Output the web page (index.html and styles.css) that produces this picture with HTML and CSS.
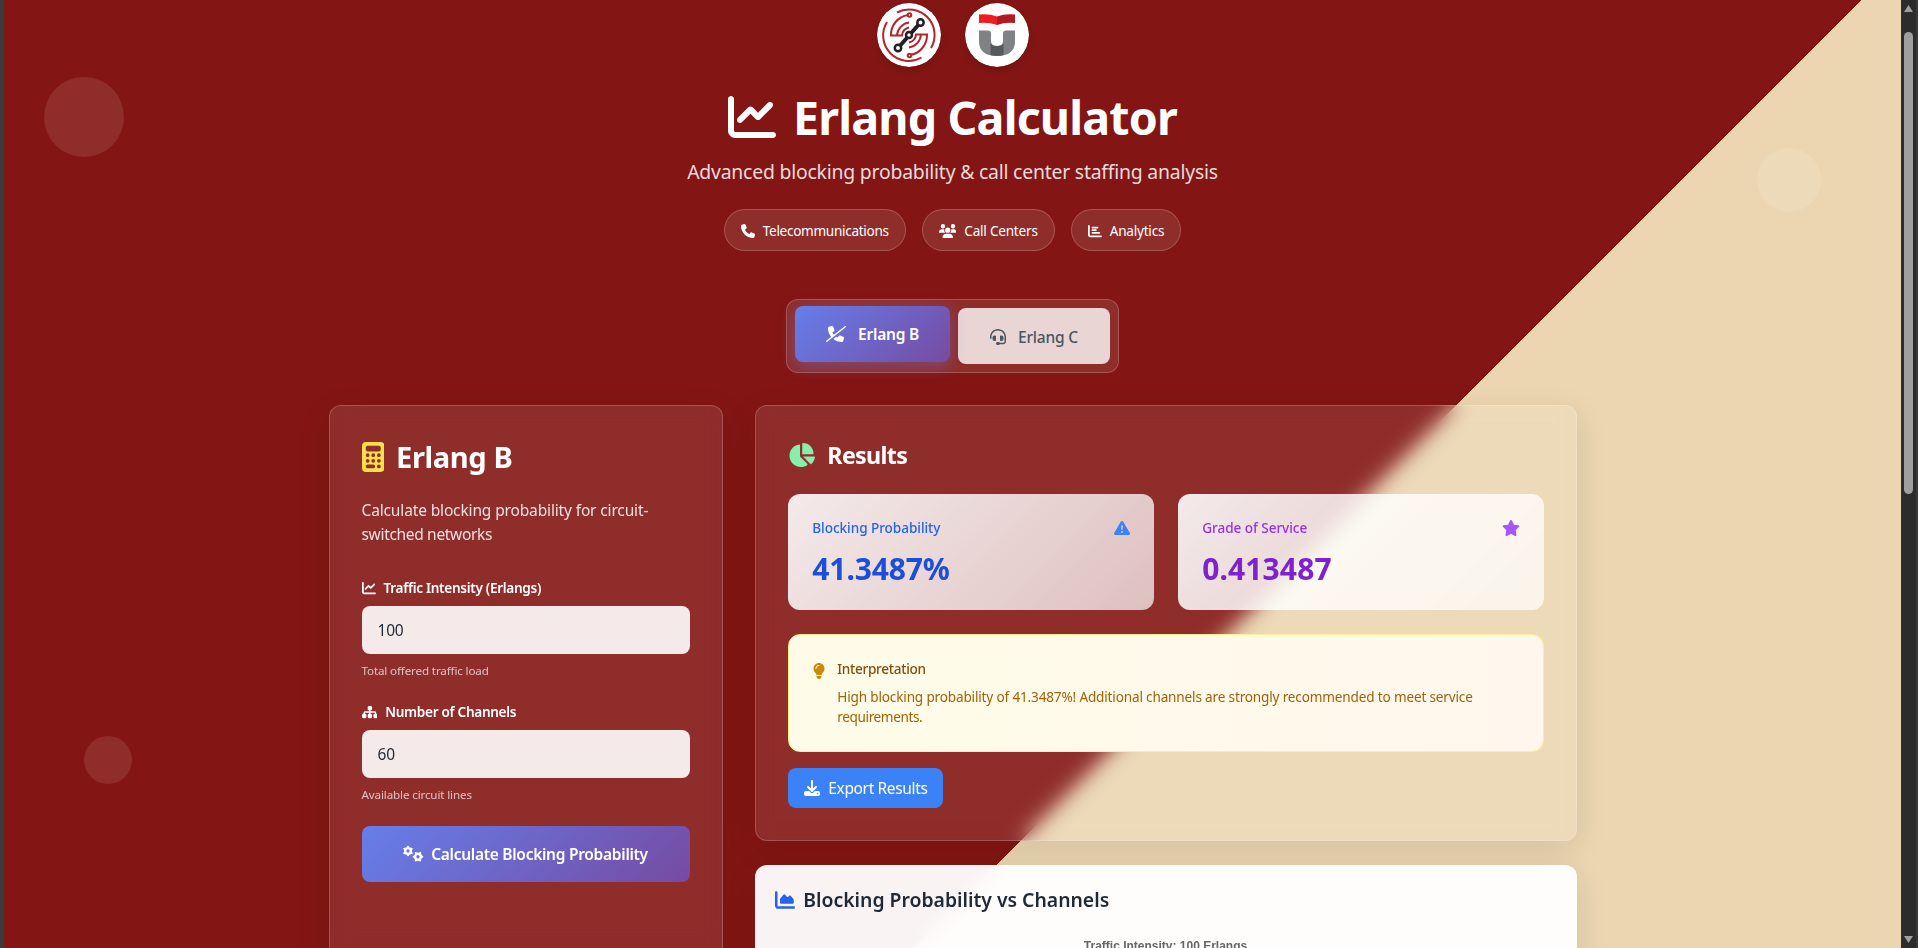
FILE: index.html
```html
<!DOCTYPE html>
<html lang="en">
<head>
<meta charset="utf-8">
<title>Erlang Calculator</title>
<link rel="stylesheet" href="styles.css">
</head>
<body>
<div class="frame">
<div class="page">
<span class="bubble bubble-a"></span><span class="bubble bubble-b"></span><span class="bubble bubble-c"></span>
<header class="hero">
<div class="logos">
<svg class="logo" viewBox="0 0 64 64"><circle cx="32" cy="32" r="32" fill="#fff"/>
<g fill="none" stroke="#b3262c" stroke-width="2"><path d="M20 9.500A25.500 25.500 0 0 1 54 45"/><path d="M10 19A25.500 25.500 0 0 0 44.500 54.500"/>
<path d="M31 12A20 20 0 0 0 14 32.500h6A14 14 0 0 1 32 19.500M32 24.500a9 9 0 0 0-7 8h-5"/><path d="M33 52A20 20 0 0 0 50 31.500h-6A14 14 0 0 1 32 44.500M32 39.500a9 9 0 0 0 7-8h5"/><circle cx="32.500" cy="12" r="1.800" fill="#fff"/><circle cx="32.500" cy="52.500" r="1.800" fill="#fff"/></g>
<path d="M21 45L43.500 19.500" stroke="#222226" stroke-width="4"/><g fill="#fff" stroke="#222226" stroke-width="2.500"><circle cx="43.500" cy="19.500" r="3.200"/><circle cx="32" cy="32" r="3"/><circle cx="21" cy="45" r="3.200"/></g></svg>
<svg class="logo" viewBox="0 0 64 64"><circle cx="32" cy="32" r="32" fill="#fff"/><path d="M14 11.500q10-1 18 2v8.500q-8-3-18-2z" fill="#ee1c23"/><path d="M50 11.500q-10-1-18 2v8.500q8-3 18-2z" fill="#b01a20"/><path d="M14 27.500h9q3 0 3 3V38q0 5 6 5t6-5v-7.500q0-3 3-3h9V38q0 15-18 15T14 38z" fill="#808285"/><path d="M25.500 40.500q2 2.500 6.500 2.500t6.500-2.500v11.500q-6.500 1.700-13 0z" fill="#58595b"/></svg>
</div>
<h1 class="title"><svg class="ic" viewBox="0 0 512 512"><path d="M64 64c0-17.700-14.300-32-32-32S0 46.300 0 64V400c0 44.200 35.800 80 80 80H480c17.700 0 32-14.300 32-32s-14.300-32-32-32H80c-8.800 0-16-7.200-16-16V64zm406.600 86.600c12.500-12.500 12.500-32.800 0-45.300s-32.800-12.500-45.300 0L320 210.700l-57.400-57.400c-12.500-12.500-32.800-12.500-45.300 0l-112 112c-12.500 12.500-12.500 32.800 0 45.300s32.800 12.500 45.300 0L240 221.300l57.400 57.400c12.500 12.500 32.800 12.500 45.300 0l128-128z"/></svg><span class="t">Erlang Calculator</span></h1>
<p class="subtitle"><span class="t">Advanced blocking probability &amp; call center staffing analysis</span></p>
<div class="pills">
<span class="pill"><svg class="ic" viewBox="0 0 512 512"><path d="M164.900 24.600c-7.700-18.600-28-28.500-47.400-23.200l-88 24C12.100 30.200 0 46 0 64C0 311.400 200.600 512 448 512c18 0 33.800-12.100 38.600-29.500l24-88c5.300-19.400-4.600-39.700-23.200-47.400l-96-40c-16.300-6.800-35.200-2.100-46.300 11.600L304.700 368C234.300 334.700 177.300 277.700 144 207.300L193.300 167c13.700-11.200 18.400-30 11.600-46.300l-40-96z"/></svg><span class="t t-tele">Telecommunications</span></span>
<span class="pill"><svg class="ic wide" viewBox="0 0 640 512"><path d="M144 0a80 80 0 1 1 0 160A80 80 0 1 1 144 0zM512 0a80 80 0 1 1 0 160A80 80 0 1 1 512 0zM0 298.700C0 239.800 47.800 192 106.700 192h42.700c15.900 0 31 3.500 44.600 9.700c-1.300 7.200-1.900 14.700-1.900 22.300c0 38.200 16.800 72.500 43.300 96H21.300C9.600 320 0 310.400 0 298.700zM405.300 320h-.7c26.600-23.500 43.300-57.800 43.300-96c0-7.600-.7-15-1.900-22.300c13.600-6.300 28.700-9.700 44.600-9.700h42.700C592.200 192 640 239.800 640 298.700c0 11.800-9.600 21.300-21.300 21.300H405.300zM224 224a96 96 0 1 1 192 0 96 96 0 1 1 -192 0zM128 485.300C128 411.700 187.700 352 261.300 352H378.700C452.300 352 512 411.700 512 485.300c0 14.700-11.900 26.700-26.700 26.700H154.700c-14.700 0-26.700-11.900-26.700-26.700z"/></svg><span class="t">Call Centers</span></span>
<span class="pill"><svg class="ic" viewBox="0 0 512 512"><path d="M32 32c17.700 0 32 14.300 32 32V400c0 8.800 7.200 16 16 16H480c17.700 0 32 14.300 32 32s-14.300 32-32 32H80c-44.200 0-80-35.800-80-80V64C0 46.300 14.300 32 32 32zm96 96c0-17.700 14.300-32 32-32l192 0c17.700 0 32 14.300 32 32s-14.300 32-32 32H160c-17.700 0-32-14.300-32-32zm32 64H288c17.700 0 32 14.300 32 32s-14.300 32-32 32H160c-17.700 0-32-14.300-32-32s14.300-32 32-32zm0 96H416c17.700 0 32 14.300 32 32s-14.300 32-32 32H160c-17.700 0-32-14.300-32-32s14.300-32 32-32z"/></svg><span class="t">Analytics</span></span>
</div>
</header>
<nav class="switch">
<button class="tab tab-on"><svg class="ic wide" viewBox="0 0 640 512"><path d="M228.900 24.600c-7.700-18.600-28-28.500-47.400-23.200l-88 24C76.100 30.200 64 46 64 64c0 107.400 37.800 206 100.800 283.100L9.200 469.100c-10.400 8.200-12.300 23.300-4.100 33.700s23.300 12.300 33.700 4.100l592-464c10.400-8.200 12.300-23.300 4.100-33.700s-23.300-12.300-33.700-4.100L253 278c-17.800-21.500-32.900-45.200-45-70.700L257.300 167c13.700-11.200 18.400-30 11.600-46.300l-40-96zm96.800 319l-91.300 72C310.700 476 407.100 512 512 512c18 0 33.800-12.100 38.600-29.500l24-88c5.300-19.400-4.600-39.700-23.200-47.400l-96-40c-16.300-6.800-35.200-2.100-46.300 11.600L368.700 368c-15-7.100-29.300-15.200-43-24.300z"/></svg><span class="t">Erlang B</span></button>
<button class="tab tab-off"><svg class="ic" viewBox="0 0 512 512"><path d="M256 48C141.100 48 48 141.100 48 256v40c0 13.300-10.700 24-24 24s-24-10.700-24-24V256C0 114.600 114.600 0 256 0S512 114.600 512 256V400.100c0 48.600-39.400 88-88.100 88L313.600 488c-8.300 14.300-23.800 24-41.600 24H240c-26.500 0-48-21.500-48-48s21.500-48 48-48h32c17.800 0 33.300 9.700 41.600 24l110.400 .1c22.100 0 40-17.900 40-40V256c0-114.900-93.100-208-208-208zM144 208h16c17.700 0 32 14.300 32 32V352c0 17.700-14.300 32-32 32H144c-35.300 0-64-28.700-64-64V272c0-35.300 28.700-64 64-64zm224 0c35.300 0 64 28.700 64 64v48c0 35.300-28.700 64-64 64H352c-17.700 0-32-14.300-32-32V240c0-17.700 14.300-32 32-32h16z"/></svg><span class="t">Erlang C</span></button>
</nav>
<main class="grid">
<section class="panel form">
<h2 class="form-title"><svg class="ic calc" viewBox="0 0 384 512"><path fill-rule="evenodd" d="M64 0C28.700 0 0 28.700 0 64V448c0 35.300 28.700 64 64 64H320c35.300 0 64-28.700 64-64V64c0-35.300-28.700-64-64-64H64zM96 64H288c17.700 0 32 14.300 32 32v32c0 17.700-14.300 32-32 32H96c-17.700 0-32-14.300-32-32V96c0-17.700 14.300-32 32-32zm32 160a32 32 0 1 1 -64 0 32 32 0 1 1 64 0zM96 352a32 32 0 1 1 0-64 32 32 0 1 1 0 64zM64 416c0-17.700 14.300-32 32-32h96c17.700 0 32 14.300 32 32s-14.300 32-32 32H96c-17.700 0-32-14.300-32-32zM192 256a32 32 0 1 1 0-64 32 32 0 1 1 0 64zm32 64a32 32 0 1 1 -64 0 32 32 0 1 1 64 0zm64-64a32 32 0 1 1 0-64 32 32 0 1 1 0 64zm32 64a32 32 0 1 1 -64 0 32 32 0 1 1 64 0zM288 448a32 32 0 1 1 0-64 32 32 0 1 1 0 64z"/></svg><span class="t">Erlang B</span></h2>
<p class="desc"><span class="t">Calculate blocking probability for circuit-</span><br><span class="t t-last">switched networks</span></p>
<label class="label"><svg class="ic" viewBox="0 0 512 512"><path d="M64 64c0-17.700-14.300-32-32-32S0 46.300 0 64V400c0 44.200 35.800 80 80 80H480c17.700 0 32-14.300 32-32s-14.300-32-32-32H80c-8.800 0-16-7.200-16-16V64zm406.600 86.600c12.500-12.500 12.500-32.800 0-45.300s-32.800-12.500-45.300 0L320 210.700l-57.400-57.400c-12.500-12.500-32.800-12.500-45.300 0l-112 112c-12.500 12.500-12.500 32.800 0 45.300s32.800 12.500 45.300 0L240 221.300l57.400 57.400c12.500 12.500 32.800 12.500 45.300 0l128-128z"/></svg><span class="t">Traffic Intensity (Erlangs)</span></label>
<div class="input"><span class="t">100</span></div>
<p class="hint"><span class="t">Total offered traffic load</span></p>
<label class="label"><svg class="ic sitemap" viewBox="0 0 576 512"><path d="M208 80c0-26.500 21.500-48 48-48h64c26.500 0 48 21.500 48 48v64c0 26.500-21.500 48-48 48h-8v40H464c30.900 0 56 25.100 56 56v32h8c26.500 0 48 21.500 48 48v64c0 26.500-21.500 48-48 48H464c-26.500 0-48-21.500-48-48V368c0-26.500 21.500-48 48-48h8V288c0-4.400-3.600-8-8-8H312v40h8c26.500 0 48 21.500 48 48v64c0 26.500-21.500 48-48 48H256c-26.500 0-48-21.500-48-48V368c0-26.500 21.500-48 48-48h8V280H112c-4.400 0-8 3.600-8 8v32h8c26.500 0 48 21.500 48 48v64c0 26.500-21.500 48-48 48H48c-26.500 0-48-21.500-48-48V368c0-26.500 21.500-48 48-48h8V288c0-30.900 25.100-56 56-56H264V192h-8c-26.500 0-48-21.500-48-48V80z"/></svg><span class="t">Number of Channels</span></label>
<div class="input"><span class="t">60</span></div>
<p class="hint"><span class="t">Available circuit lines</span></p>
<button class="submit"><svg class="ic wide gears" viewBox="0 0 640 512"><g id="gear" fill="none" stroke="#fff"><circle cx="160" cy="160" r="92" stroke-width="76"/><path stroke-width="66" stroke-linecap="round" d="M160 45V22M160 275v23M61 103l-20-12M259 217l20 12M61 217l-20 12M259 103l20-12"/></g><use href="#gear" transform="rotate(30 480 342) translate(320 182)"/></svg><span class="t">Calculate Blocking Probability</span></button>
</section>
<div class="right">
<section class="panel results">
<h2 class="results-title"><svg class="ic pie" viewBox="0 0 576 512"><path d="M304 240V16.600c0-9 7-16.600 16-16.600C443.700 0 544 100.300 544 224c0 9-7.600 16-16.600 16H304zM32 272C32 150.700 122.100 50.300 239 34.300c9.200-1.300 17 6.100 17 15.400V288L412.500 444.500c6.700 6.700 6.200 17.700-1.500 23.100C371.800 495.600 323.800 512 272 512C139.500 512 32 404.600 32 272zm526.400 16c9.300 0 16.600 7.800 15.400 17c-7.700 55.900-34.600 105.600-73.900 142.300c-6 5.600-15.400 5.200-21.200-.7L320 288H558.400z"/></svg><span class="t">Results</span></h2>
<div class="cards">
<div class="card blue"><div class="card-head"><span class="t">Blocking Probability</span><svg class="ic" viewBox="0 0 512 512"><path d="M256 32c14.200 0 27.300 7.500 34.500 19.800l216 368c7.300 12.400 7.300 27.700 .2 40.100S486.300 480 472 480H40c-14.300 0-27.600-7.700-34.700-20.100s-7-27.800 .2-40.100l216-368C228.700 39.500 241.800 32 256 32zm0 128c-13.300 0-24 10.700-24 24V296c0 13.300 10.700 24 24 24s24-10.700 24-24V184c0-13.300-10.700-24-24-24zm32 224a32 32 0 1 0 -64 0 32 32 0 1 0 64 0z"/></svg></div><div class="value"><span class="t">41.3487%</span></div></div>
<div class="card purple"><div class="card-head"><span class="t">Grade of Service</span><svg class="ic star" viewBox="0 0 576 512"><path d="M316.900 18C311.600 7 300.400 0 288.100 0s-23.400 7-28.800 18L195 150.300 51.400 171.500c-12 1.800-22 10.200-25.700 21.700s-.7 24.200 7.900 32.700L137.800 329 113.200 474.700c-2 12 3 24.200 12.900 31.300s23 8 33.800 2.300l128.300-68.500 128.300 68.500c10.800 5.700 23.900 4.900 33.800-2.300s14.900-19.300 12.900-31.300L438.500 329 542.700 225.900c8.600-8.500 11.700-21.200 7.900-32.700s-13.700-19.900-25.700-21.700L381.200 150.300 316.900 18z"/></svg></div><div class="value"><span class="t">0.413487</span></div></div>
</div>
<div class="note"><svg class="ic bulb" viewBox="0 0 384 512"><path d="M272 384c9.600-31.900 29.500-59.100 49.200-86.200c5.200-7.100 10.400-14.200 15.400-21.400c19.800-28.500 31.400-63 31.400-100.300C368 78.800 289.200 0 192 0S16 78.800 16 176c0 37.300 11.600 71.900 31.400 100.300c5 7.200 10.200 14.300 15.400 21.400c19.800 27.100 39.700 54.400 49.200 86.200H272zM192 512c44.200 0 80-35.800 80-80V416H112v16c0 44.200 35.800 80 80 80zM112 176c0 8.800-7.200 16-16 16s-16-7.200-16-16c0-61.900 50.100-112 112-112c8.800 0 16 7.200 16 16s-7.200 16-16 16c-44.200 0-80 35.800-80 80z"/></svg><div><h4 class="note-title"><span class="t">Interpretation</span></h4><p class="note-text"><span class="t">High blocking probability of 41.3487%! Additional channels are strongly recommended to meet service</span><br><span class="t t-last">requirements.</span></p></div></div>
<button class="export"><svg class="ic" viewBox="0 0 512 512"><path d="M288 32c0-17.700-14.300-32-32-32s-32 14.300-32 32V274.700l-73.400-73.400c-12.500-12.500-32.800-12.500-45.300 0s-12.500 32.800 0 45.300l128 128c12.500 12.500 32.800 12.500 45.300 0l128-128c12.500-12.500 12.500-32.800 0-45.300s-32.800-12.500-45.300 0L288 274.700V32zM64 352c-35.300 0-64 28.700-64 64v32c0 35.300 28.700 64 64 64H448c35.300 0 64-28.700 64-64V416c0-35.300-28.700-64-64-64H346.500l-45.300 45.300c-25 25-65.500 25-90.500 0L165.500 352H64zm368 56a24 24 0 1 1 0 48 24 24 0 1 1 0-48z"/></svg><span class="t">Export Results</span></button>
</section>
<section class="chart">
<h3 class="chart-title"><svg class="ic" viewBox="0 0 512 512"><path d="M64 64c0-17.700-14.300-32-32-32S0 46.300 0 64V400c0 44.200 35.800 80 80 80H480c17.700 0 32-14.300 32-32s-14.300-32-32-32H80c-8.800 0-16-7.200-16-16V64zm96 288H448c17.700 0 32-14.300 32-32V251.800c0-7.600-2.700-15-7.700-20.800l-65.800-76.800c-12.100-14.200-33.700-15-46.900-1.800l-21 21c-10 10-26.400 9.200-35.400-1.600l-39.200-47c-12.600-15.100-35.700-15.400-48.700-.6L135.900 215c-5.100 5.800-7.900 13.300-7.900 21.100v84c0 17.700 14.300 32 32 32z"/></svg><span class="t">Blocking Probability vs Channels</span></h3>
<p class="chart-sub">Traffic Intensity: 100 Erlangs</p>
</section>
</div>
</main>
</div>
<aside class="scrollbar"><span class="arrow up"></span><span class="thumb"></span><span class="arrow down"></span></aside>
</div>
</body>
</html>
```
FILE: styles.css
```css
*{box-sizing:border-box;margin:0;padding:0}
html,body{height:948px;overflow:hidden}
body{font-family:"Noto Sans","Open Sans",sans-serif;font-size:16px;line-height:24px;color:#fff;background:#3a3a3a}
button{font:inherit;color:inherit;border:0}
.frame{display:flex;height:948px;padding-left:4px;overflow:hidden}
.page{position:relative;width:1897px;height:948px;overflow:hidden;background:linear-gradient(135deg,#831614 1313.100px,#ebd6b1 1313.100px)}
.t{white-space:nowrap;display:inline-block;font-size:.97em}
.ic{width:1em;height:1em;fill:currentColor;flex:none;display:block}
.ic.wide{width:1.25em}
.bubble{position:absolute;border-radius:50%;background:rgba(255,255,255,.1)}
.bubble-a{left:40px;top:77px;width:80px;height:80px}
.bubble-b{left:1753px;top:148px;width:64px;height:64px}
.bubble-c{left:80px;top:736px;width:48px;height:48px}
.hero{position:relative;display:flex;flex-direction:column;align-items:center;padding-top:3px}
.logos{display:flex;gap:24px}
.logo{display:block;width:64px;height:64px;border-radius:50%;box-shadow:0 4px 6px rgba(0,0,0,.12)}
.title{display:flex;align-items:center;gap:17px;margin-top:20px;font-size:48px;line-height:60px;font-weight:700;letter-spacing:-.84px}
.subtitle{margin-top:11px;font-size:20px;line-height:28px;color:rgba(255,255,255,.85);letter-spacing:-.215px}
.pills{display:flex;gap:16px;margin-top:23px}
.pill{display:flex;align-items:center;gap:8px;height:42px;padding:1px 16px 0;border:1px solid rgba(255,255,255,.2);border-radius:21px;background:rgba(255,255,255,.1);font-size:14px;line-height:20px;letter-spacing:-.22px}
.t-tele{letter-spacing:-.305px}
.switch{position:relative;display:flex;gap:8px;width:333px;height:74px;margin:48px auto 0;padding:8px;border:1px solid rgba(255,255,255,.2);border-radius:12px;background:rgba(255,255,255,.1)}
.tab{display:flex;align-items:center;gap:12px;height:56px;padding:0 31px;border-radius:8px;letter-spacing:-.21px}
.tab-on{width:155px;font-weight:600;background:linear-gradient(135deg,#667eea,#764ba2);box-shadow:0 4px 15px rgba(102,126,234,.4);transform:translateY(-2px)}
.tab-off{width:152px;padding:1px 32px 0;font-weight:500;background:rgba(255,255,255,.8);color:#4b5563}
.grid{position:relative;display:flex;gap:32px;width:1248px;margin:32px auto 0}
.panel{border:1px solid rgba(255,255,255,.2);border-radius:12px;background:rgba(255,255,255,.1);backdrop-filter:blur(10px);box-shadow:0 8px 32px rgba(0,0,0,.1);padding:32px}
.form{width:394px;height:700px}
.form-title{display:flex;align-items:center;gap:12px;padding-top:1px;font-size:30px;line-height:36px;font-weight:700;letter-spacing:-.39px}
.calc{width:.75em;color:#fde047}
.desc{margin:23px 0 32px;color:rgba(255,255,255,.85);letter-spacing:-.15px}
.desc .t-last{letter-spacing:-.33px}
.label{display:flex;align-items:center;gap:8px;font-size:14px;line-height:20px;font-weight:600;letter-spacing:-.3px}
.sitemap,.pie,.star{width:1.125em}
.input{height:48px;margin:8px 0;padding:12px 16px;border-radius:8px;background:rgba(255,255,255,.9);color:#1f2937;letter-spacing:-.2px}
.hint{padding-top:1px;margin-bottom:23px;font-size:12px;line-height:16px;color:rgba(255,255,255,.7);letter-spacing:-.14px}
.submit{display:flex;align-items:center;justify-content:center;gap:8px;width:100%;height:56px;border-radius:8px;background:linear-gradient(135deg,#667eea,#764ba2);font-weight:600;letter-spacing:-.28px}
.gears{overflow:visible}
.right{display:flex;flex-direction:column;gap:24px;width:822px}
.right .t{margin-left:.8px}
.results{height:436px}
.results-title{display:flex;align-items:center;gap:12px;padding-top:1px;font-size:24px;line-height:32px;font-weight:700;letter-spacing:-.67px}
.pie{color:#86efac}
.cards{display:flex;gap:24px;margin:23px 0 24px}
.card{flex:1;height:116px;padding:24px;border-radius:12px;background:linear-gradient(135deg,rgba(255,255,255,.9),rgba(255,255,255,.7))}
.card-head{display:flex;align-items:center;justify-content:space-between;font-size:14px;line-height:20px;font-weight:500;letter-spacing:-.06px}
.card-head .ic{font-size:16px}
.value{margin-top:13px;font-size:30px;line-height:36px;font-weight:700}
.value .t{font-size:1em}
.blue{color:#2563eb}.blue .ic{color:#3b82f6}.blue .value{color:#1d4ed8;letter-spacing:-.12px}
.purple{color:#9333ea}.purple .ic{color:#a855f7}.purple .value{color:#7e22ce;letter-spacing:.1px}
.note{display:flex;gap:12px;height:118px;padding:24px;border:1px solid #fef08a;border-radius:12px;background:linear-gradient(to right,#fefce8,#fff7ed);color:#a16207;font-size:14px;line-height:20px}
.bulb{width:12px;height:16px;margin-top:4px;color:#ca8a04}
.note-title{font-weight:500;color:#854d0e;margin-bottom:8px;letter-spacing:-.28px}
.note-text{letter-spacing:-.168px}
.note-text .t-last{letter-spacing:-.38px}
.export{display:flex;align-items:center;gap:8px;width:155px;height:40px;margin-top:16px;padding:0 16px;border-radius:8px;background:#3b82f6;letter-spacing:-.36px}
.chart{height:400px;padding:20px;border-radius:12px;background:rgba(255,255,255,.95);backdrop-filter:blur(10px);box-shadow:0 8px 32px rgba(0,0,0,.1);color:#1f2937}
.chart-title{display:flex;align-items:center;gap:8px;font-size:20px;line-height:30px;font-weight:600;letter-spacing:-.015px}
.chart-title .ic{color:#2563eb}
.chart-sub{margin-top:24px;text-align:center;font:bold 12px/14px "Liberation Sans",sans-serif;color:#666}
.scrollbar{display:flex;flex-direction:column;align-items:center;width:15px;height:948px;background:#2c2c2c}
.arrow{width:9px;height:7px;background:#9f9f9f}
.up{margin-top:5px;clip-path:polygon(50% 0,100% 100%,0 100%)}
.down{margin-top:auto;margin-bottom:5px;clip-path:polygon(0 0,100% 0,50% 100%)}
.thumb{width:9px;height:462px;margin-top:20px;border-radius:5px;background:#9f9f9f}
```
